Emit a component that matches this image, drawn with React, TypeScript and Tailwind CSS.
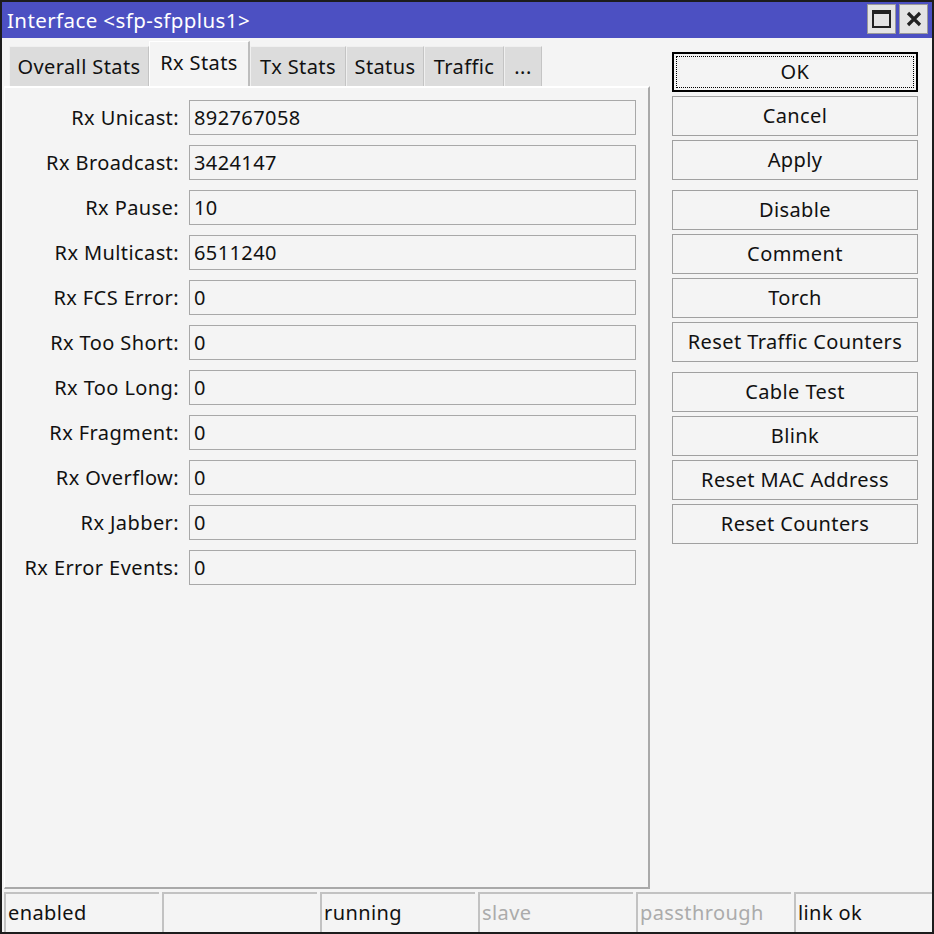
import React from "react";

const rows: { label: string; value: string }[] = [
  { label: "Rx Unicast:", value: "892767058" },
  { label: "Rx Broadcast:", value: "3424147" },
  { label: "Rx Pause:", value: "10" },
  { label: "Rx Multicast:", value: "6511240" },
  { label: "Rx FCS Error:", value: "0" },
  { label: "Rx Too Short:", value: "0" },
  { label: "Rx Too Long:", value: "0" },
  { label: "Rx Fragment:", value: "0" },
  { label: "Rx Overflow:", value: "0" },
  { label: "Rx Jabber:", value: "0" },
  { label: "Rx Error Events:", value: "0" },
];

const tabs = [
  { name: "Overall Stats", w: "w-[140px]" },
  { name: "Rx Stats", w: "w-[101px]", active: true },
  { name: "Tx Stats", w: "w-[96px]" },
  { name: "Status", w: "w-[78px]" },
  { name: "Traffic", w: "w-[80px]" },
  { name: "...", w: "w-[38px]" },
];

const buttonGroups = [
  ["OK", "Cancel", "Apply"],
  ["Disable", "Comment", "Torch", "Reset Traffic Counters"],
  ["Cable Test", "Blink", "Reset MAC Address", "Reset Counters"],
];

const statusCells = [
  { text: "enabled", w: "w-[155px]" },
  { text: "", w: "w-[155px]" },
  { text: "running", w: "w-[155px]" },
  { text: "slave", w: "w-[155px]", dim: true },
  { text: "passthrough", w: "w-[155px]", dim: true },
  { text: "link ok", w: "flex-1" },
];

const App: React.FC = () => {
  return (
    <div
      className="w-[934px] h-[934px] border-2 border-[#1c1c1c] bg-[#f4f4f4] flex flex-col text-[20px] tracking-[0.4px] text-[#111] overflow-hidden"
      style={{ fontFamily: '"Noto Sans", "Open Sans", sans-serif' }}
    >
      {/* title bar */}
      <div className="h-[36px] shrink-0 bg-[#4c50c2] flex items-center pl-[5px] pr-[4px]">
        <span className="text-white leading-none flex-1 mt-[1px] whitespace-nowrap text-[20.5px]">Interface &lt;sfp-sfpplus1&gt;</span>
        <div className="flex gap-[3px] -mt-[2px]">
          <div className="w-[29px] h-[30px] bg-[#e4e4e4] border border-[#9a9a9a] flex items-center justify-center">
            <div className="w-[19px] h-[18px] border-2 border-t-[4px] border-[#222]"></div>
          </div>
          <div className="w-[29px] h-[30px] bg-[#e4e4e4] border border-[#9a9a9a] flex items-center justify-center">
            <svg width="18" height="18" viewBox="0 0 18 18">
              <path d="M3 3 L15 15 M15 3 L3 15" stroke="#222" strokeWidth="3.2" />
            </svg>
          </div>
        </div>
      </div>

      {/* body */}
      <div className="flex flex-1 min-h-0">
        {/* left: tabs + panel */}
        <div className="w-[646px] ml-[2px] flex flex-col">
          <div className="h-[48px] shrink-0 flex items-end pl-[5px]">
            {tabs.map((t) =>
              t.active ? (
                <div
                  key={t.name}
                  className={`${t.w} h-[45px] bg-[#f4f4f4] border-l border-t border-white border-r-2 border-r-[#bdbdbd] flex items-center justify-center pb-[3px] whitespace-nowrap`}
                >
                  {t.name}
                </div>
              ) : (
                <div
                  key={t.name}
                  className={`${t.w} h-[40px] bg-[#dcdcdc] border-l border-t border-[#f0f0f0] border-r border-r-[#c4c4c4] flex items-center justify-center whitespace-nowrap`}
                >
                  {t.name}
                </div>
              )
            )}
          </div>
          <div className="flex-1 border-t-2 border-l border-white border-r-2 border-r-[#a9a9a9] border-b-2 border-b-[#a9a9a9] pt-[12px] flex flex-col gap-[10px]">
            {rows.map((r) => (
              <div key={r.label} className="flex items-center h-[35px]">
                <div className="w-[175px] text-right pr-[1px] whitespace-nowrap">{r.label}</div>
                <div className="ml-[9px] w-[447px] h-[35px] border border-[#a8a8a8] bg-[#f4f4f4] flex items-center pl-[4px]">
                  {r.value}
                </div>
              </div>
            ))}
          </div>
        </div>

        {/* right: buttons */}
        <div className="ml-[22px] w-[246px] pt-[14px] flex flex-col gap-[10px]">
          {buttonGroups.map((g, gi) => (
            <div key={gi} className="flex flex-col gap-[4px]">
              {g.map((b) =>
                b === "OK" ? (
                  <div
                    key={b}
                    className="h-[40px] border-2 border-black p-[2px] bg-[#f4f4f4]"
                  >
                    <div className="h-full border border-dotted border-black flex items-center justify-center">
                      {b}
                    </div>
                  </div>
                ) : (
                  <div
                    key={b}
                    className="h-[40px] border border-[#a0a0a0] bg-[#f4f4f4] flex items-center justify-center whitespace-nowrap"
                  >
                    {b}
                  </div>
                )
              )}
            </div>
          ))}
        </div>
      </div>

      {/* status bar */}
      <div className="h-[43px] shrink-0 flex gap-[3px] pt-[3px] pl-[2px]">
        {statusCells.map((c, i) => (
          <div
            key={i}
            className={`${c.w} h-[40px] border-t-2 border-l-2 border-[#c2c2c2] flex items-center pl-[2px] ${
              c.dim ? "text-[#ababab]" : "text-[#111]"
            }`}
          >
            {c.text}
          </div>
        ))}
      </div>
    </div>
  );
};

export default App;
